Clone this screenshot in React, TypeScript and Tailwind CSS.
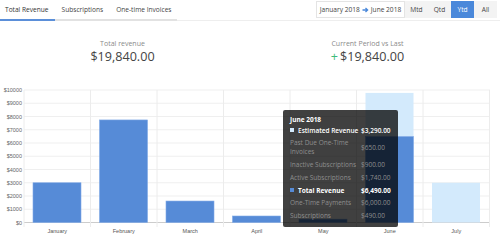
import React from 'react';

const tabs = ['Total Revenue', 'Subscriptions', 'One-time Invoices'];
const ranges = ['Mtd', 'Qtd', 'Ytd', 'All'];

const months = [
  { name: 'January', actual: 3000, est: 0 },
  { name: 'February', actual: 7740, est: 0 },
  { name: 'March', actual: 1620, est: 0 },
  { name: 'April', actual: 490, est: 0 },
  { name: 'May', actual: 250, est: 0 },
  { name: 'June', actual: 6490, est: 3290 },
  { name: 'July', actual: 0, est: 3000 },
];

const X0 = 24;
const COL = 66.5;
const ZERO = 137.5;
const STEP = 13.25; // px per $1000

const y = (v: number) => ZERO - (v / 1000) * STEP;

type Row = { label: string; value: string; strong?: boolean; swatch?: string };

const rows: Row[] = [
  { label: 'Estimated Revenue', value: '$3,290.00', strong: true, swatch: '#d3eafc' },
  { label: 'Past Due One-Time Invoices', value: '$650.00' },
  { label: 'Inactive Subscriptions', value: '$900.00' },
  { label: 'Active Subscriptions', value: '$1,740.00' },
  { label: 'Total Revenue', value: '$6,490.00', strong: true, swatch: '#568bd7' },
  { label: 'One-Time Payments', value: '$6,000.00' },
  { label: 'Subscriptions', value: '$490.00' },
];

const Chart: React.FC = () => (
  <svg width={500} height={157} className="block">
    {Array.from({ length: 11 }).map((_, i) => (
      <g key={i}>
        <line x1={X0} x2={490} y1={y(i * 1000)} y2={y(i * 1000)} stroke={i === 0 ? '#cccccc' : '#efefef'} strokeWidth={1} />
        <text x={22} y={y(i * 1000) + 2} textAnchor="end" fontSize={5.5} fill="#666" fontFamily="'Liberation Sans', Arial, sans-serif">
          ${i * 1000}
        </text>
      </g>
    ))}
    {Array.from({ length: 8 }).map((_, i) => (
      <line key={i} x1={X0 + i * COL} x2={X0 + i * COL} y1={5} y2={142} stroke="#ececec" strokeWidth={1} />
    ))}
    {months.map((m, i) => {
      const bx = X0 + i * COL + 9;
      return (
        <g key={m.name}>
          {m.est > 0 && (
            <rect x={bx} y={y(m.actual + m.est)} width={48} height={y(m.actual) - y(m.actual + m.est)} fill="#d3eafc" />
          )}
          {m.actual > 0 && (
            <rect x={bx} y={y(m.actual)} width={48} height={ZERO - y(m.actual)} fill="#568bd7" stroke="#7fa9e6" strokeWidth={0.6} />
          )}
          <text x={X0 + i * COL + COL / 2} y={148} textAnchor="middle" fontSize={5.5} fill="#555" fontFamily="'Liberation Sans', Arial, sans-serif">
            {m.name}
          </text>
        </g>
      );
    })}
  </svg>
);

export default function App() {
  return (
    <div className="w-[500px] h-[242px] bg-white overflow-hidden text-[#333]" style={{ fontFamily: "'Open Sans', 'Liberation Sans', sans-serif" }}>
      {/* header */}
      <div className="flex justify-between h-[21px] border-b border-[#eeeeee]">
        <div className="flex items-end -mb-px">
          {tabs.map((t, i) => (
            <div
              key={t}
              className={`h-[21px] px-[6px] flex items-center text-[6.6px] border-b-2 ${i === 0 ? 'border-[#5b8fd9] text-[#333]' : 'border-[#e2e2e2] text-[#444]'} ${i === 0 ? 'pl-[5px]' : 'pl-[7px]'}`}
            >
              {t}
            </div>
          ))}
        </div>
        <div className="flex h-[17px] mt-[1px] mr-[3px] text-[6.6px]">
          <div className="w-[89px] flex items-center justify-center gap-[2px] bg-white border border-[#e4e4e4] text-[#444]">
            <span>January 2018</span>
            <svg width={7} height={6} viewBox="0 0 7 6">
              <path d="M0.5 3H5.5M3.5 1L5.6 3L3.5 5" stroke="#4a88da" strokeWidth={1.3} fill="none" />
            </svg>
            <span>June 2018</span>
          </div>
          {ranges.map((r) => (
            <div
              key={r}
              className={`w-[23px] flex items-center justify-center ${r === 'Ytd' ? 'bg-[#4a88da] text-white' : 'bg-[#f3f3f3] text-[#444]'}`}
            >
              {r}
            </div>
          ))}
        </div>
      </div>

      {/* totals */}
      <div className="grid grid-cols-2 w-[490px] pt-[18px] h-[64px]">
        <div className="flex flex-col items-center">
          <div className="text-[7px] leading-[9px] text-[#8a8a8a]">Total revenue</div>
          <div className="text-[12.6px] leading-[15px] mt-[1px] text-[#444]">$19,840.00</div>
        </div>
        <div className="flex flex-col items-center">
          <div className="text-[7px] leading-[9px] text-[#8a8a8a]">Current Period vs Last</div>
          <div className="text-[12.6px] leading-[15px] mt-[1px] text-[#444]">
            <span className="text-[#3dbb79] mr-[2px]">+</span>$19,840.00
          </div>
        </div>
      </div>

      {/* chart */}
      <div className="relative">
        <Chart />
        <div className="absolute left-[283px] top-[25px] w-[115px] h-[117px] bg-black/75 rounded-[2px] pl-[7px] pt-[5px] text-[6.5px] leading-[9px]">
          <div className="font-bold text-white mb-[1.5px]">June 2018</div>
          <div className="grid grid-cols-[71px_auto] gap-y-[3.8px]">
            {rows.map((r) => (
              <React.Fragment key={r.label}>
                <div className={`flex items-start ${r.strong ? 'text-white' : 'text-[#8e8e8e]'} ${r.label === 'Total Revenue' ? 'font-bold' : r.strong ? 'font-semibold' : ''}`}>
                  {r.swatch && <span className="w-[4px] h-[4px] mt-[2.5px] mr-[4px] shrink-0" style={{ background: r.swatch }} />}
                  <span>{r.label}</span>
                </div>
                <div className={`flex items-center ${r.strong ? 'text-white' : 'text-[#8e8e8e]'} ${r.label === 'Total Revenue' ? 'font-bold' : r.strong ? 'font-semibold' : ''}`}>
                  {r.value}
                </div>
              </React.Fragment>
            ))}
          </div>
        </div>
      </div>
    </div>
  );
}
